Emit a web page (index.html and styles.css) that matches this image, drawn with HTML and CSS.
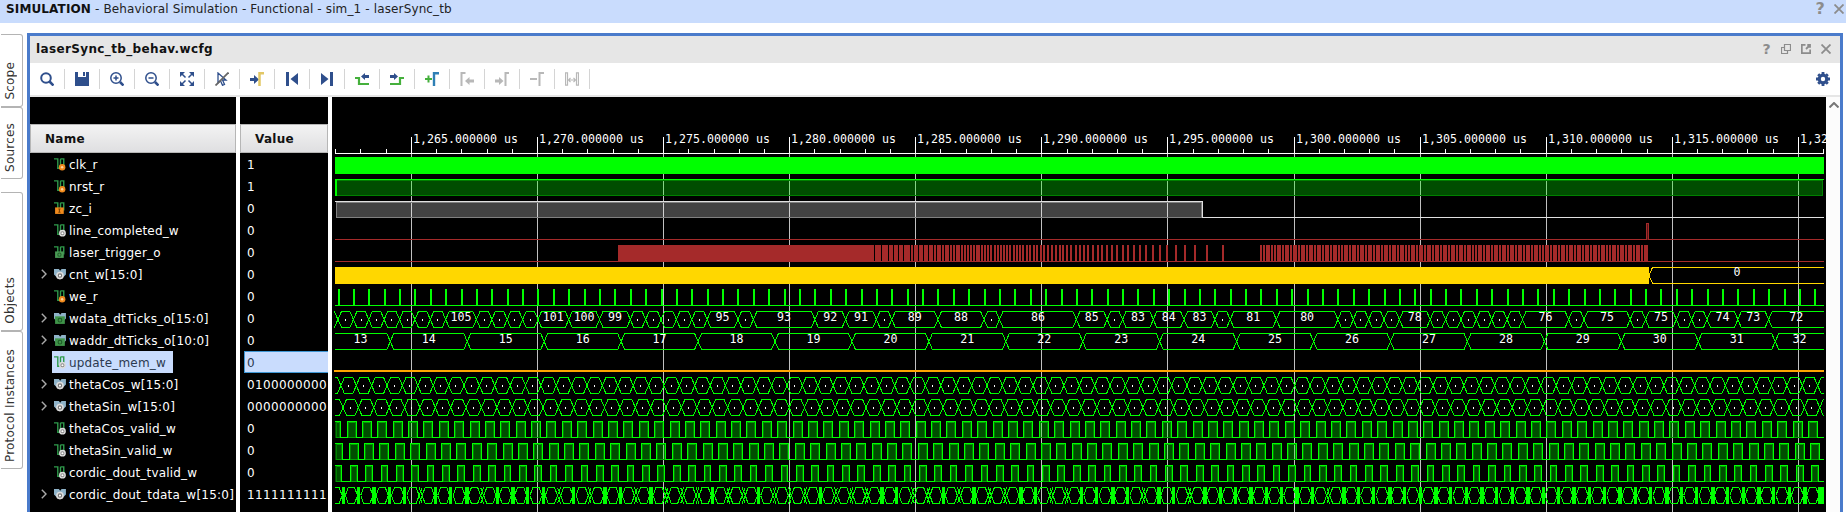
FILE: index.html
```html
<!DOCTYPE html>
<html lang="en">
<head>
<meta charset="utf-8">
<title>laserSync_tb_behav.wcfg</title>
<link rel="stylesheet" href="styles.css">
</head>
<body>
<svg class="defs" width="0" height="0">
  <symbol id="wire" viewBox="0 0 12 12"><path d="M0 .8h3.500v8.700H6V.8M6 .8h3v7" fill="none" stroke="#2f9a4b" stroke-width="1.300"/></symbol>
  <symbol id="reg" viewBox="0 0 12 12"><use href="#wire"/><circle cx="7.500" cy="8.500" r="3" fill="#f08a1d"/><circle cx="7.500" cy="8.500" r="1.100" fill="#ffd9a0"/></symbol>
  <symbol id="net" viewBox="0 0 12 12"><use href="#wire"/><circle cx="7.800" cy="8.500" r="2.500" fill="#888" stroke="#dcdcdc" stroke-width="1.300"/><circle cx="7.800" cy="8.500" r="1" fill="#fff"/></symbol>
  <symbol id="inp" viewBox="0 0 12 12"><use href="#wire"/><path d="M1 5h8v6H1z" fill="#f08a1d"/><path d="M4 6.500h2M5 6.500v3M4 9.500h2" stroke="#7a4300" fill="none"/></symbol>
  <symbol id="outp" viewBox="0 0 12 12"><use href="#wire"/><path d="M1 5h8v6H1z" fill="#4a9a55"/><circle cx="5" cy="8" r="1.500" fill="none" stroke="#24602c"/></symbol>
  <symbol id="bus" viewBox="0 0 12 12"><path d="M0 1h4.500l1.200 1.500L7 1h4v5L9 8H2L0 6z" fill="#8fb3c9"/></symbol>
  <symbol id="busnet" viewBox="0 0 12 12"><use href="#bus"/><circle cx="5.500" cy="7" r="2.800" fill="#777" stroke="#ddd" stroke-width="1.500"/><circle cx="5.500" cy="7" r="1" fill="#fff"/></symbol>
  <symbol id="busout" viewBox="0 0 12 12"><use href="#bus"/><path d="M1 4h9v7H1z" fill="#3f9449"/><circle cx="5.500" cy="7.500" r="1.700" fill="none" stroke="#1f5a28"/></symbol>
  <symbol id="chev" viewBox="0 0 6 10"><path d="M.8 .8L5 5 .8 9.200" fill="none" stroke="#aaa" stroke-width="1.400"/></symbol>
</svg>

<header class="top">
  <div><b>SIMULATION</b> - Behavioral Simulation - Functional - sim_1 - laserSync_tb</div>
  <div class="top-actions"><span class="help">?</span>
    <svg width="10" height="10"><path d="M.5.5l9 9M9.500.5l-9 9" class="gx"/></svg></div>
</header>

<div class="body">
  <nav class="side">
    <div class="tab scope"><span>Scope</span></div>
    <div class="tab sources"><span>Sources</span></div>
    <div class="tab objects"><span>Objects</span></div>
    <div class="tab proto"><span>Protocol Instances</span></div>
  </nav>

  <main class="frame">
    <div class="title">
      <b>laserSync_tb_behav.wcfg</b>
      <div class="title-actions">
        <span class="help small">?</span>
        <svg width="10" height="10"><path d="M3.500 .5h6v6h-6zM3.500 3.500h-3v6h6v-3" class="gx thin"/></svg>
        <svg width="10" height="10"><path d="M4.500 .8H.8v8.400h8.400V5.500M5 5l4-4M6.300 1H9v2.700" class="gx"/></svg>
        <svg width="10" height="10"><path d="M.5.5l9 9M9.500.5l-9 9" class="gx"/></svg>
      </div>
    </div>

    <div class="tools">
      <div class="tool"><svg viewBox="0 0 14 14"><circle cx="6" cy="6" r="4.800" class="b2"/><path d="M9.500 9.500l4 4" class="b3"/></svg></div>
      <div class="tool"><svg viewBox="0 0 14 14"><path d="M0 0h3v5h8V0h3v14H0zM8 0h2v4H8z" class="bf"/></svg></div>
      <div class="tool"><svg viewBox="0 0 14 14"><circle cx="6" cy="6" r="5.200" class="b15"/><path d="M3.500 6h5M6 3.500v5" class="b15"/><path d="M10 10l3.500 3.500" class="b3"/></svg></div>
      <div class="tool"><svg viewBox="0 0 14 14"><circle cx="6" cy="6" r="5.200" class="b15"/><path d="M3.500 6h5" class="b15"/><path d="M10 10l3.500 3.500" class="b3"/></svg></div>
      <div class="tool"><svg viewBox="0 0 14 14"><path d="M0 0h5L0 5zM14 0v5L9 0zM0 14V9l5 5zM14 14H9l5-5z" class="bf"/><path d="M2 2l3.500 3.500M12 2L8.500 5.500M2 12l3.500-3.500M12 12L8.500 8.500" class="b15"/></svg></div>
      <div class="tool"><svg viewBox="0 0 14 14"><path d="M3 1l8 7H7.500l2 4.500-2 .8-2-4.500L3 11z" fill="none" stroke="#2f4f8c" stroke-width="1.300"/><path d="M.5 13.500L13.500 .5" stroke="#666" stroke-width="1.800"/></svg></div>
      <div class="tool"><svg viewBox="0 0 14 14"><path d="M0 6h4V3l5 4.500L4 12V9H0z" class="bf"/><path d="M9.500 14V1.300H14" fill="none" stroke="#e2c766" stroke-width="2.500"/></svg></div>
      <div class="tool"><svg viewBox="0 0 14 14"><path d="M1 0h3v14H1zM13 1v12L5.500 7z" class="bf"/></svg></div>
      <div class="tool"><svg viewBox="0 0 14 14"><path d="M10 0h3v14h-3zM1 1v12l7.500-6z" class="bf"/></svg></div>
      <div class="tool"><svg viewBox="0 0 14 14"><path d="M0 6h4v6h10" fill="none" stroke="#45b03c" stroke-width="2.200"/><path d="M14 3h-4V1L6 4.500 10 8V6h4z" class="bf"/></svg></div>
      <div class="tool"><svg viewBox="0 0 14 14"><path d="M14 6h-4v6H0" fill="none" stroke="#45b03c" stroke-width="2.200"/><path d="M0 3h4V1l4 3.500L4 8V6H0z" class="bf"/></svg></div>
      <div class="tool"><svg viewBox="0 0 14 14"><path d="M0 7h7M3.500 3.500v7" fill="none" stroke="#45b03c" stroke-width="2"/><path d="M9 14V1.200h5" fill="none" stroke="#2f7fb5" stroke-width="2.400"/></svg></div>
      <div class="tool"><svg viewBox="0 0 14 14"><path d="M1.500 14V1h4" class="g2"/><path d="M14 7.500H9.500V5L5 9l4.500 4v-2.500H14z" class="gf"/></svg></div>
      <div class="tool"><svg viewBox="0 0 14 14"><path d="M10.500 14V1H14" class="g2"/><path d="M0 7.500h4V5l4.500 4L4 13v-2.500H0z" class="gf"/></svg></div>
      <div class="tool"><svg viewBox="0 0 14 14"><path d="M9.500 14V1H14M0 7h7" class="g2"/></svg></div>
      <div class="tool"><svg viewBox="0 0 14 14"><path d="M.5.800h2v12.400h-2zM11.500.8h2v12.400h-2z" class="g1"/><path d="M4 8h6M5.500 5.800L3.500 8l2 2.200M8.500 5.800l2 2.200-2 2.200" class="g1"/></svg></div>
      <svg class="gear" viewBox="0 0 14 14"><circle cx="7" cy="7" r="3.800" fill="none" stroke="#2f4f8c" stroke-width="3.200"/><path d="M7 0v2M7 12v2M0 7h2M12 7h2M2.200 2.200l1.300 1.300M10.500 10.500l1.300 1.300M2.200 11.800l1.300-1.300M10.500 3.500l1.300-1.300" stroke="#2f4f8c" stroke-width="2.800"/></svg>
    </div>

    <div class="content">
      <section class="names">
        <div class="head">Name</div>
        <div class="row"><i></i><svg class="ic"><use href="#reg"/></svg><span>clk_r</span></div>
        <div class="row"><i></i><svg class="ic"><use href="#reg"/></svg><span>nrst_r</span></div>
        <div class="row"><i></i><svg class="ic"><use href="#inp"/></svg><span>zc_i</span></div>
        <div class="row"><i></i><svg class="ic"><use href="#net"/></svg><span>line_completed_w</span></div>
        <div class="row"><i></i><svg class="ic"><use href="#outp"/></svg><span>laser_trigger_o</span></div>
        <div class="row bus"><i><svg class="ch"><use href="#chev"/></svg></i><svg class="ic"><use href="#busnet"/></svg><span>cnt_w[15:0]</span></div>
        <div class="row"><i></i><svg class="ic"><use href="#reg"/></svg><span>we_r</span></div>
        <div class="row bus"><i><svg class="ch"><use href="#chev"/></svg></i><svg class="ic"><use href="#busout"/></svg><span>wdata_dtTicks_o[15:0]</span></div>
        <div class="row bus"><i><svg class="ch"><use href="#chev"/></svg></i><svg class="ic"><use href="#busout"/></svg><span>waddr_dtTicks_o[10:0]</span></div>
        <div class="row"><i></i><div class="picked"><svg class="ic"><use href="#net"/></svg><span>update_mem_w</span></div></div>
        <div class="row bus"><i><svg class="ch"><use href="#chev"/></svg></i><svg class="ic"><use href="#busnet"/></svg><span>thetaCos_w[15:0]</span></div>
        <div class="row bus"><i><svg class="ch"><use href="#chev"/></svg></i><svg class="ic"><use href="#busnet"/></svg><span>thetaSin_w[15:0]</span></div>
        <div class="row"><i></i><svg class="ic"><use href="#net"/></svg><span>thetaCos_valid_w</span></div>
        <div class="row"><i></i><svg class="ic"><use href="#net"/></svg><span>thetaSin_valid_w</span></div>
        <div class="row"><i></i><svg class="ic"><use href="#net"/></svg><span>cordic_dout_tvalid_w</span></div>
        <div class="row bus"><i><svg class="ch"><use href="#chev"/></svg></i><svg class="ic"><use href="#busnet"/></svg><span>cordic_dout_tdata_w[15:0]</span></div>
      </section>
      <section class="values">
        <div class="head">Value</div>
        <div class="val">1</div><div class="val">1</div><div class="val">0</div><div class="val">0</div>
        <div class="val">0</div><div class="val">0</div><div class="val">0</div><div class="val">0</div>
        <div class="val">0</div><div class="val on">0</div><div class="val">0100000000</div><div class="val">0000000000</div>
        <div class="val">0</div><div class="val">0</div><div class="val">0</div><div class="val">1111111111</div>
      </section>
      <svg id="waves" class="waves" width="1494" height="415" viewBox="332 97 1494 415"></svg>
      <div class="scroll"><svg width="10" height="6"><path d="M.5 5.500L5 1l4.500 4.500" fill="none" stroke="#777" stroke-width="2"/></svg></div>
    </div>
  </main>
</div>
<script src="waves.js"></script>
</body>
</html>
```
FILE: styles.css
```css
* { box-sizing: border-box; }
body { margin: 0; height: 512px; overflow: hidden; background: #fff; color: #111; font: 12px "DejaVu Sans", sans-serif; }
.defs { position: absolute; }
.top { height: 23px; padding: 0 2px 6px 6px; background: #c9dcfd; display: flex; justify-content: space-between; align-items: center; font-size: 12px; letter-spacing: .135px; color: #222; }
.top b { color: #111; }
.top-actions { display: flex; align-items: center; gap: 9px; padding-top: 1px; }
.help { font: bold 16px/16px "DejaVu Sans", sans-serif; color: #8c8c8c; }
.help.small { font-size: 14px; }
.gx { fill: none; stroke: #8c8c8c; stroke-width: 1.8; }
.gx.thin { stroke-width: 1.2; }
.body { display: flex; height: 489px; }
.side { width: 27px; padding-top: 11px; display: flex; flex-direction: column; }
.tab { width: 22px; margin-left: 1px; border: 1px solid #b4b4b4; border-left: 0; border-radius: 0 3px 3px 0; display: flex; align-items: flex-end; padding: 0 0 6px 2px; color: #333; }
.tab span { writing-mode: vertical-rl; transform: rotate(180deg); line-height: 14px; letter-spacing: .2px; white-space: nowrap; }
.scope { height: 73px; }
.sources { height: 72px; }
.objects { height: 139px; margin-top: 13px; }
.proto { height: 138px; }
.frame { width: 1816px; height: 500px; margin-top: 10px; border: 3px solid #4a7bcb; border-bottom: 0; display: flex; flex-direction: column; }
.title { height: 27px; flex: none; padding: 0 9px 1px 6px; background: #e6e6e6; display: flex; justify-content: space-between; align-items: center; letter-spacing: .36px; }
.title-actions { display: flex; align-items: center; gap: 10px; }
.tools { height: 34px; flex: none; border-bottom: 2px solid #e6e6e6; display: flex; align-items: center; }
.tool { width: 35px; height: 20px; border-right: 1px solid #d4d4d4; display: flex; align-items: center; justify-content: center; }
.tool svg { width: 14px; height: 14px; }
.gear { width: 14px; height: 14px; margin: 0 10px 0 auto; }
.bf { fill: #2f4f8c; }
.b15, .b2, .b3 { fill: none; stroke: #2f4f8c; stroke-width: 1.5; }
.b2 { stroke-width: 2; }
.b3 { stroke-width: 2.6; }
.gf { fill: #b8b8b8; }
.g1, .g2 { fill: none; stroke: #b8b8b8; stroke-width: 1.2; }
.g2 { stroke-width: 2; }
.content { height: 415px; flex: none; display: flex; }
.names, .values { background: #000; color: #fff; padding-top: 27px; margin-right: 4px; overflow: hidden; flex: none; }
.names { width: 206px; }
.values { width: 88px; }
.head { height: 29px; border: 1px solid #b6b6b6; background: linear-gradient(#f3f3f3, #dfdfe1); color: #111; font-weight: bold; line-height: 28px; padding-left: 14px; letter-spacing: .3px; }
.row { height: 22px; display: flex; align-items: center; white-space: nowrap; letter-spacing: .17px; }
.row.bus { letter-spacing: .23px; }
.row span { padding-top: 2px; }
.row i { width: 24px; flex: none; padding-left: 11px; display: flex; }
.ch { width: 6px; height: 10px; }
.ic { width: 13px; height: 13px; margin-right: 2px; flex: none; }
.picked { height: 22px; width: 121px; margin-left: -2px; padding-left: 2px; background: #c9dcfd; color: #2b3950; display: flex; align-items: center; }
.val { height: 22px; line-height: 24px; padding-left: 7px; letter-spacing: .37px; }
.val.on { margin-left: 4px; padding-left: 2px; line-height: 22px; background: #c9dcfd; border: 1px solid #3f97d4; border-right: 0; color: #2b3950; }
.waves { background: #000; display: block; flex: none; shape-rendering: crispEdges; }
.waves text { fill: #fff; font: 11.63px "DejaVu Sans Mono", monospace; }
.scroll { flex: 1; background: #fcfcfc; padding: 5px 0 0 3px; }
.scroll svg { display: block; }
```
FILE: waves.js
```js
const G = '#00ff00', BROWN = '#a52a2a', PERIOD = 15.383, X0 = 335, X1 = 1824;
const out = [];
const rowTop = row => 157 + 22 * row;
const rect = (x, y, w, h, fill) => out.push(`<rect x="${x}" y="${y}" width="${w}" height="${h}" fill="${fill}"/>`);
const line = (d, color) => out.push(`<path d="${d}" fill="none" stroke="${color}"/>`);
const label = (x, y, text, anchor = 'middle') => out.push(`<text x="${x}" y="${y}" text-anchor="${anchor}">${text}</text>`);

// Ruler and grid
rect(X0, 153, X1 - X0, 1, '#fff');
for (let k = -3; k <= 56; k++) {
  const x = Math.floor(411.4 + 25.218 * k);
  if (k % 5) { rect(x, 149, 1, 4, '#fff'); continue; }
  rect(x, 137, 1, 17, '#fff');
  rect(x, 154, 1, 358, '#c0c0c0');
  label(x + 2, 143, `1,${265 + k}.000000 us`, 'start');
}

// Value segment of a bus, open at the clipped edges
function hex(a, b, row, color = G, s = 3.5) {
  const t = rowTop(row) + .5, m = t + 8, e = t + 16;
  const l = a <= X0, r = b >= X1;
  const xa = l ? X0 : a + s, xb = r ? X1 : b - s;
  if (xb < xa) return;
  line(`${l ? `M${xa} ${t}` : `M${a} ${m}L${xa} ${t}`}H${xb}${r ? `M${xb} ${e}` : `L${b} ${m}L${xb} ${e}`}H${xa}${l ? '' : `L${a} ${m}`}`, color);
}

// Filled logic-high level
function high(a, b, row) {
  a = Math.floor(a); b = Math.floor(b);
  const y = rowTop(row), l = Math.max(a, X0), w = b - l;
  if (w < 3) return;
  rect(l, y, w, 17, 'rgba(0,255,0,.3)');
  rect(l + 1, y + 1, w - 2, 1, '#00a000');
  rect(l + 1, y + 1, 1, 15, '#008000');
  rect(b - 2, y + 1, 1, 15, '#008000');
  rect(l, y, w, 1, G);
  if (a > X0) rect(a, y, 1, 17, G);
  rect(b - 1, y, 1, 17, G);
  rect(l + 1, y + 16, w - 2, 1, '#00a000');
}

// clk_r, nrst_r
rect(X0, rowTop(0), X1 - X0, 17, G);
rect(X0, rowTop(1), X1 - X0 - 1, 17, 'rgba(0,255,0,.3)');
rect(X0, rowTop(1) + 1, 1488, 1, '#008000');
rect(X0, rowTop(1) + 16, 1488, 1, '#008000');
rect(1822, rowTop(1) + 1, 1, 16, '#008000');
rect(X0, rowTop(1), X1 - X0, 1, G);
rect(X0, rowTop(1), 2, 17, G);

// zc_i
rect(336, 201, 866, 17, 'rgba(255,255,255,.26)');
line('M336.500 217.500V202.500H1201.500V217.500Z', '#808080');
line('M335 201.500H1202.500V217.500H1824', '#e0e0e0');

// line_completed_w
rect(X0, 239, X1 - X0, 1, BROWN);
rect(1646, 223, 3, 17, BROWN);
rect(1647, 224, 1, 16, '#5a1414');

// laser_trigger_o
rect(X0, 261, X1 - X0, 1, BROWN);
const slits = [874, 881, 888, 893, 898, 903, 910, 913, 918, 923, 928, 933, 936, 941, 944, 949, 952, 955, 960, 963, 966, 969, 972, 975, 980, 983, 986, 989, 992];
let from = 618;
for (const s of slits) { rect(from, 245, s - from, 17, BROWN); from = s + 1; }
for (const x of [994, 997, 1000, 1003, 1006, 1009, 1013, 1016, 1019, 1022, 1026, 1029, 1033, 1036, 1040, 1043, 1047, 1051, 1055, 1059, 1062, 1066, 1070, 1075, 1079, 1083, 1087, 1092, 1097, 1101, 1106, 1111, 1116, 1122, 1127, 1133, 1139, 1145, 1152, 1159, 1166, 1175, 1184, 1194, 1206, 1222]) rect(x, 245, 2, 17, BROWN);
for (let x = 1260.95; x < 1647; x += 2.68) rect(Math.floor(x), 245, 2, 17, BROWN);

// cnt_w
rect(X0, rowTop(5), 1314, 17, '#ffd700');
hex(1649, X1, 5, '#ffd700');
label(1737, 276, '0');

// we_r
rect(X0, rowTop(6) + 16, X1 - X0, 1, G);
const P = k => 338 + PERIOD * k;
for (let k = 0; k <= 96; k++) rect(Math.floor(P(k)), rowTop(6), 2, 17, G);

// wdata_dtTicks_o: [first pulse, last pulse, value]
const data = [[7, 9, 105], [13, 15, 101], [15, 17, 100], [17, 19, 99], [24, 26, 95], [27, 31, 93], [31, 33, 92], [33, 35, 91], [36, 39, 89], [39, 42, 88], [43, 48, 86], [48, 50, 85], [51, 53, 83], [53, 55, 84], [55, 57, 83], [58, 61, 81], [61, 65, 80], [69, 71, 78], [77, 80, 76], [81, 84, 75], [85, 87, 75], [89, 91, 74], [91, 93, 73], [93, 97, 72]];
line(`M334 ${rowTop(7)}L338 ${rowTop(7) + 8.5}L334 ${rowTop(7) + 17}`, G);
for (let k = 0; k < 97;) {
  const seg = data.find(d => d[0] === k);
  const end = seg ? seg[1] : k + 1;
  const a = P(k), b = Math.min(end >= 97 ? X1 : P(end), X1);
  hex(a, b, 7);
  if (seg) label((a + b) / 2, 321, seg[2]);
  else rect(Math.floor((a + b) / 2), rowTop(7) + 8, 1, 2, '#fff');
  k = end;
}

// waddr_dtTicks_o
for (let v = 13; v <= 32; v++) {
  const a = v === 13 ? X0 : 390.3 + 76.94 * (v - 14);
  const b = v === 32 ? X1 : 390.3 + 76.94 * (v - 13);
  hex(a, b, 8);
  label(v === 13 ? 360.5 : (a + b) / 2, 343, v);
}

// update_mem_w
rect(334, 370, 1490, 2, '#ffa500');

// thetaCos_w, thetaSin_w
for (const [row, base] of [[10, 340.9], [11, 343]]) {
  for (let k = -1; k < 97; k++) {
    const a = base + PERIOD * k, b = a + PERIOD;
    hex(a, b, row);
    if (k >= 0 && b < X1) rect(Math.floor(a + 7.4), rowTop(row) + 8, 1, 2, '#fff');
  }
}

// thetaCos_valid_w, thetaSin_valid_w, cordic_dout_tvalid_w
for (const [row, base, w] of [[12, 347, 10], [13, 349.2, 10], [14, 350.3, 7.7]]) {
  let low = X0;
  for (let k = -1; k < 96; k++) {
    const a = base + PERIOD * k;
    if (a > X0) rect(low, rowTop(row) + 16, Math.floor(a) - low, 1, G);
    high(a, a + w, row);
    low = Math.floor(a + w);
  }
  rect(low, rowTop(row) + 16, X1 - low, 1, G);
}

// cordic_dout_tdata_w: glitch bursts between stable values
const hatched = new Set([5, 9, 14, 16, 19, 21, 22, 23, 25, 26, 28, 29, 30, 32, 33, 34, 37, 38, 40, 42, 43, 46, 47, 52, 55, 64]);
for (let k = -1; k <= 96; k++) {
  const c = 343.7 + PERIOD * k, t = rowTop(15) + .5, e = t + 16;
  if (k < 96) hex(c + 1.6, Math.min(c + PERIOD - 1.6, X1 - 1), 15, G, 3);
  if (k < 0) continue;
  if (hatched.has(k)) {
    line(`M${c - 4.5} ${t}L${c + 1.5} ${e}M${c - 1.5} ${t}L${c + 4.5} ${e}M${c + 1.5} ${t}L${c - 4.5} ${e}M${c + 4.5} ${t}L${c - 1.5} ${e}`, G);
  } else {
    const x = Math.floor(c - 1.5);
    rect(x, rowTop(15), k === 96 ? X1 - x : 3 + (k % 3 === 2), 17, G);
  }
}

document.getElementById('waves').innerHTML = out.join('');
```
